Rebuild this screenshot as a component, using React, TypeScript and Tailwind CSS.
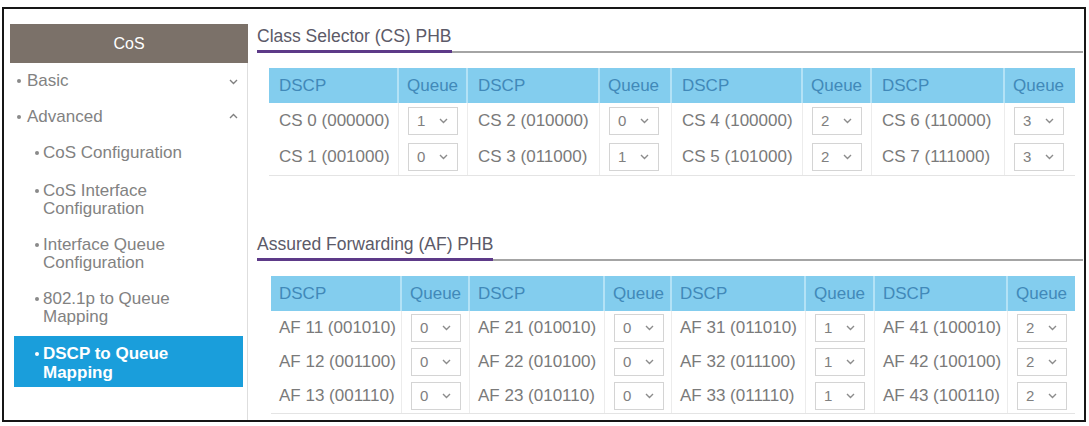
import React from "react";

const FONT = { fontFamily: '"Liberation Sans", Arial, sans-serif' };

type Row = string[];

const csRows: Row[] = [
  ["CS 0 (000000)", "1", "CS 2 (010000)", "0", "CS 4 (100000)", "2", "CS 6 (110000)", "3"],
  ["CS 1 (001000)", "0", "CS 3 (011000)", "1", "CS 5 (101000)", "2", "CS 7 (111000)", "3"],
];

const afRows: Row[] = [
  ["AF 11 (001010)", "0", "AF 21 (010010)", "0", "AF 31 (011010)", "1", "AF 41 (100010)", "2"],
  ["AF 12 (001100)", "0", "AF 22 (010100)", "0", "AF 32 (011100)", "1", "AF 42 (100100)", "2"],
  ["AF 13 (001110)", "0", "AF 23 (010110)", "0", "AF 33 (011110)", "1", "AF 43 (100110)", "2"],
];

function Chevron({ up = false, className = "" }: { up?: boolean; className?: string }) {
  return (
    <svg width="9" height="6" viewBox="0 0 9 6" className={className}>
      <path
        d={up ? "M1 5 L4.5 1.5 L8 5" : "M1 1 L4.5 4.5 L8 1"}
        fill="none"
        stroke="currentColor"
        strokeWidth="1.4"
      />
    </svg>
  );
}

function QueueSelect({ value }: { value: string }) {
  return (
    <div className="w-[50px] h-[28px] border border-[#d4d4d4] bg-white flex items-center justify-between pl-[8px] pr-[9px] text-[15px] text-[#808080]">
      <span>{value}</span>
      <Chevron className="text-[#8c8c8c]" />
    </div>
  );
}

function Section({
  title,
  rows,
  cols,
  tableMl,
  rowH,
  dscpPl,
}: {
  title: string;
  rows: Row[];
  cols: string;
  tableMl: string;
  rowH: string;
  dscpPl: string;
}) {
  return (
    <div>
      <div className="flex items-end border-b-2 border-[#a4a4a4]">
        <span className="-mb-[2px] pb-[3px] border-b-[3px] border-[#5d3a88] text-[17.5px] leading-[22px] text-[#5c5a68]">
          {title}
        </span>
      </div>
      <div className={`mt-[15px] mr-[8px] ${tableMl}`}>
        <div className={`grid ${cols} h-[35px] bg-[#83cdee] text-[17px] text-[#4189b9]`}>
          {["DSCP", "Queue", "DSCP", "Queue", "DSCP", "Queue", "DSCP", "Queue"].map((h, i) => (
            <div
              key={i}
              className={`flex items-center ${i % 2 === 0 ? dscpPl : "pl-[8px]"} ${
                i < 7 ? "border-r-2 border-[#b3e2f6]" : ""
              }`}
            >
              {h}
            </div>
          ))}
        </div>
        <div className="border-b border-[#e4e4e4]">
          {rows.map((r, ri) => (
            <div key={ri} className={`grid ${cols} ${rowH} text-[17px] text-[#7a7a7a]`}>
              {r.map((c, ci) => (
                <div
                  key={ci}
                  className={`flex items-center ${ci % 2 === 0 ? dscpPl : "pl-[9px]"} ${
                    ci < 7 ? "border-r border-[#ececec]" : ""
                  }`}
                >
                  {ci % 2 === 0 ? c : <QueueSelect value={c} />}
                </div>
              ))}
            </div>
          ))}
        </div>
      </div>
    </div>
  );
}

function Dot({ className = "" }: { className?: string }) {
  return <span className={`inline-block w-[4px] h-[4px] rounded-full shrink-0 ${className}`} />;
}

function MenuItem({
  lines,
  sub = false,
  extraClass = "",
}: {
  lines: string[];
  sub?: boolean;
  extraClass?: string;
}) {
  return (
    <div className={`flex items-start py-[9px] leading-[18px] text-[17px] text-[#828282] ${sub ? "pl-[25px]" : "pl-[7px]"} ${extraClass}`}>
      <span className="h-[18px] flex items-center">
        <Dot className="bg-[#8a8a8a]" />
      </span>
      <div className={sub ? "ml-[4px]" : "ml-[6px]"}>
        {lines.map((l, i) => (
          <div key={i}>{l}</div>
        ))}
      </div>
    </div>
  );
}

export default function App() {
  return (
    <div className="w-[1089px] h-[426px] bg-white overflow-hidden" style={FONT}>
      <div className="ml-[2px] mt-[7px] w-[1084px] h-[415px] border-2 border-[#161616] flex">
        {/* navigation */}
        <div className="pl-[6px] pt-[15px] flex flex-col">
          <div className="w-[238px] h-[39px] bg-[#7b7169] flex items-center justify-center text-white text-[16px]">
            CoS
          </div>
          <div className="w-[238px] flex-1 border-r border-[#dedede] flex flex-col">
            <div className="relative">
              <MenuItem lines={["Basic"]} />
              <Chevron className="absolute right-[9px] top-[16px] text-[#808080]" />
            </div>
            <div className="relative">
              <MenuItem lines={["Advanced"]} />
              <Chevron up className="absolute right-[9px] top-[14px] text-[#808080]" />
            </div>
            <MenuItem sub lines={["CoS Configuration"]} extraClass="pb-[11px]" />
            <MenuItem sub lines={["CoS Interface", "Configuration"]} />
            <MenuItem sub lines={["Interface Queue", "Configuration"]} />
            <MenuItem sub lines={["802.1p to Queue", "Mapping"]} />
            <div className="mt-[1px] ml-[4px] mr-[4px] bg-[#1a9edb] pt-[8px] pb-[5px] pl-[21px] flex items-start text-[17px] leading-[19px] text-white font-bold">
              <span className="h-[19px] flex items-center">
                <Dot className="bg-white" />
              </span>
              <div className="ml-[4px]">
                <div>DSCP to Queue</div>
                <div>Mapping</div>
              </div>
            </div>
          </div>
        </div>

        {/* content */}
        <div className="flex-1 pl-[9px] pr-[1px] pt-[16px]">
          <Section
            title="Class Selector (CS) PHB"
            rows={csRows}
            cols="grid-cols-[130px_69px_132px_72px_131px_69px_133px_70px]"
            tableMl="ml-[12px]"
            rowH="h-[36px]"
            dscpPl="pl-[10px]"
          />
          <div className="mt-[57px]">
            <Section
              title="Assured Forwarding (AF) PHB"
              rows={afRows}
              cols="grid-cols-[131px_68px_135px_67px_134px_69px_133px_67px]"
              tableMl="ml-[14px]"
              rowH="h-[34px]"
              dscpPl="pl-[8px]"
            />
          </div>
        </div>
      </div>
    </div>
  );
}
